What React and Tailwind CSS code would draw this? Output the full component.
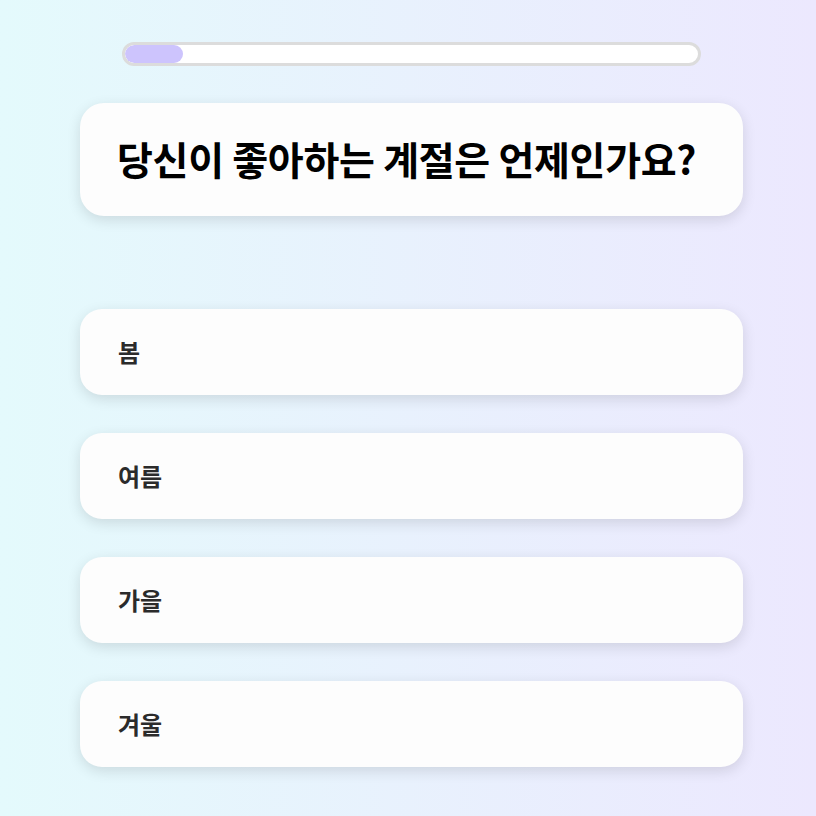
export default function App() {
  const options = ["봄", "여름", "가을", "겨울"];
  return (
    <div
      className="w-[816px] h-[816px] overflow-hidden bg-gradient-to-r from-[#e4fafc] to-[#ece8fe]"
      style={{ fontFamily: '"Noto Sans CJK KR", "Noto Sans", sans-serif' }}
    >
      <div className="ml-[80px] w-[663px] pt-[42px] flex flex-col">
        <div className="mx-[42px] h-[24px] rounded-full border-[3px] border-[#dcdcdc] bg-white overflow-hidden">
          <div className="h-full w-[58px] rounded-full bg-[#cdc4fd]" />
        </div>
        <div className="mt-[37px] h-[113px] rounded-[24px] bg-[#fdfdfd] shadow-[0_4px_14px_rgba(0,0,0,0.12)] flex items-center pl-[37px] pb-[3px]">
          <span className="text-[39px] leading-none font-bold text-black tracking-[-0.3px]">
            당신이 좋아하는 계절은 언제인가요?
          </span>
        </div>
        <div className="mt-[93px] flex flex-col gap-[38px]">
          {options.map((o) => (
            <div
              key={o}
              className="h-[86px] rounded-[22px] bg-[#fdfdfd] shadow-[0_4px_14px_rgba(0,0,0,0.12)] flex items-center pl-[38px]"
            >
              <span className="text-[24px] leading-none font-bold text-[#2b2b2b]">{o}</span>
            </div>
          ))}
        </div>
      </div>
    </div>
  );
}
